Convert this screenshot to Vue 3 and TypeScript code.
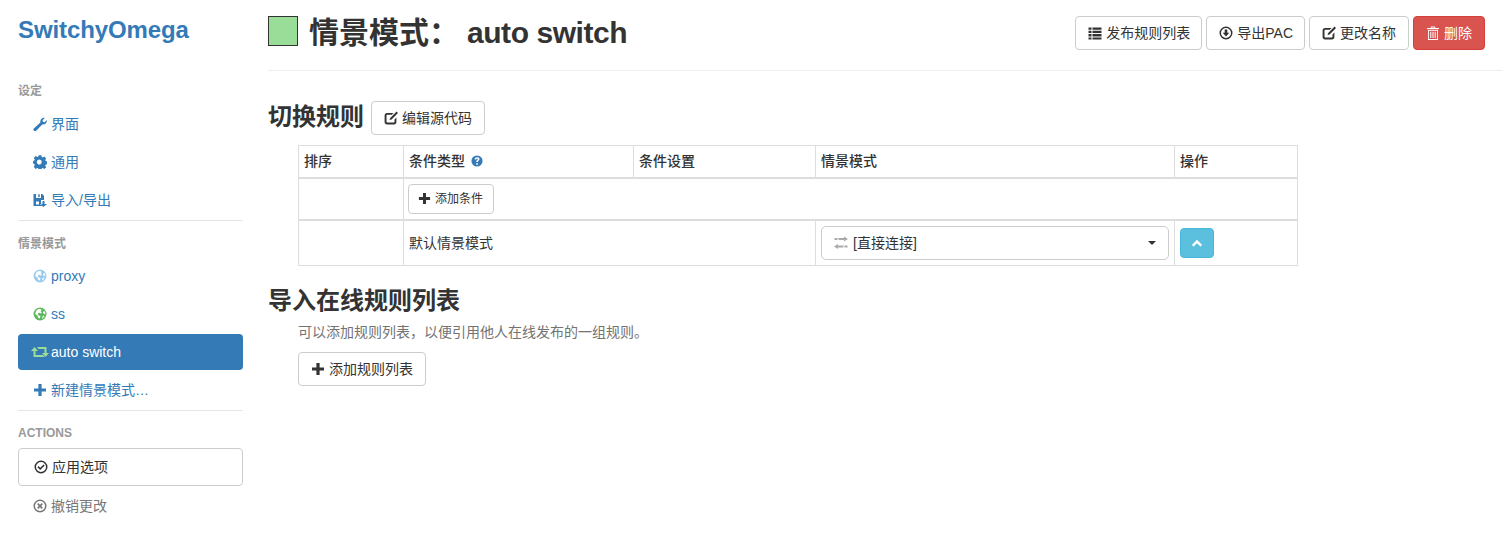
<script setup lang="ts">
// glyphicon-like icons, drawn on a 14x14 box
const icons: Record<string, string> = {
  wrench: 'M.8 11.6 7.4 5.4C6.9 3 8.8.4 11.8.9L9.6 3.2l.4 1.7 1.7.4 2.1-2.2c.5 3-2 5-4.5 4.4L2.9 13.9c-.5.5-1.1.5-1.6 0l-.5-.5c-.5-.5-.5-1.3 0-1.8Z',
  cog: 'M5.7.3h2.6l.4 1.8 1.1.5 1.6-1 1.8 1.8-1 1.6.5 1.1 1.8.4v2.6l-1.8.4-.5 1.1 1 1.6-1.8 1.8-1.6-1-1.1.5-.4 1.8H5.7l-.4-1.8-1.1-.5-1.6 1L.8 11.7l1-1.6-.5-1.1L.1 8.6V6l1.2-.4.5-1.1-1-1.6L2.6 1.1l1.6 1 1.1-.5ZM7 4.7a2.5 2.5 0 1 0 0 4.8 2.5 2.5 0 0 0 0-4.8Z',
  save: 'M.5 1H3v4h5V1h1.2L11 2.8V7H8v3.5h.5V13H.5V1ZM5.2 1.200h1.500V4H5.200V1.200ZM3 8.500v3h3v-3H3ZM9.500 8h2v3H14l-3.500 3L7 11h2.500V8Z',
  globe: 'M7 .5a6.500 6.500 0 1 0 0 13 6.500 6.500 0 0 0 0-13ZM4 3c1-.8 2-1.200 3-1.200L8.600 3 7.500 4.400 8.800 5l-.7 1.400L6 5.800 4.600 7 5.600 8.600 7.500 9 6.800 11.600 5.400 11 4.600 8.800 2.400 7.200C2.400 5.500 3 4 4 3Zm6.400 1.400 1.400-.2c.5 1 .6 2 .4 3l-1.400-.4-.9-1.200.5-1.200Zm-.2 4.200 1.300.5c-.5 1.200-1.400 2.100-2.500 2.600L9.400 10l.8-1.400Z',
  retweet: 'M3.500 2 7 6H4.500v4H12l1.500 2H2.500V6H0L3.500 2ZM6 2h9.500v6H18l-3.500 4L11 8h2.500V4H7.500L6 2Z',
  plus: 'M5.400 1h3.200v4.400H13v3.200H8.600V13H5.400V8.600H1V5.400h4.400V1Z',
  okCircle: 'M7 .5a6.500 6.500 0 1 1 0 13 6.500 6.500 0 0 1 0-13Zm0 1.500a5 5 0 1 0 0 10 5 5 0 0 0 0-10ZM9.600 4.400l1.100 1.100-4.500 4.500-2.800-2.800 1.100-1.100 1.700 1.700 3.400-3.400Z',
  xCircle: 'M7 .5a6.500 6.500 0 1 1 0 13 6.500 6.500 0 0 1 0-13Zm0 1.500a5 5 0 1 0 0 10 5 5 0 0 0 0-10ZM5.300 4.100 7 5.800l1.700-1.700 1.200 1.200L8.200 7l1.700 1.700-1.200 1.200L7 8.200 5.300 9.900 4.100 8.700 5.800 7 4.100 5.300l1.200-1.200Z',
  list: 'M.5 1.500h3v2.300h-3V1.500Zm4 0h9v2.300h-9V1.500ZM.5 4.800h3v2.300h-3V4.800Zm4 0h9v2.300h-9V4.800ZM.5 8.100h3v2.300h-3V8.100Zm4 0h9v2.300h-9V8.100ZM.5 11.400h3v2.100h-3v-2.100Zm4 0h9v2.100h-9v-2.100Z',
  download: 'M7 .5a6.500 6.500 0 1 1 0 13 6.500 6.500 0 0 1 0-13Zm0 1.500a5 5 0 1 0 0 10 5 5 0 0 0 0-10ZM5.700 3.400h2.600v3.300h2L7 10.400 3.700 6.700h2V3.400Z',
  edit: 'M3 2h6.500L7.800 3.800H3.200c-.4 0-.7.3-.7.7v6.200c0 .4.3.7.7.7h6.600c.4 0 .7-.3.7-.7V8.500l1.900-1.900V11c0 1.400-1 2.400-2.400 2.400H3c-1.400 0-2.400-1-2.400-2.400V4.400C.6 3 1.600 2 3 2Zm9.600-1.400 1.400 1.400-6.400 6.400-2.100.7.7-2.100 6.400-6.400Z',
  trash: 'M5 .5h4l.5 1.500H13v1H1V2h3.500L5 .5Zm.6.9-.2.6h3.200l-.2-.6H5.600ZM2 3.800h10V14H2V3.800Zm.9.9V13.100h8.200V4.700H2.900ZM4.300 5.800h1v6.200h-1V5.800Zm2.200 0h1v6.200h-1V5.800Zm2.200 0h1v6.200h-1V5.800Z',
  help: 'M7 .5a6.500 6.500 0 1 1 0 13 6.500 6.500 0 0 1 0-13ZM6 9.700v1.800h2V9.700H6Zm1-7C5.400 2.700 4.300 3.600 4.200 5.200h1.900c0-.6.4-1 .9-1s.9.3.9.8c0 .9-1.900 1.200-1.900 3.100h1.900c0-1.200 2-1.500 2-3.300 0-1.400-1.200-2.100-2.900-2.100Z',
  transfer: 'M10 .5l4 2.500-4 2.500V4H4.500V2H10V.5ZM.5 2h3v2h-3V2ZM4 8v1.500h5.500v2H4V13L0 10.500 4 8Zm6.500 1.500h3v2h-3v-2Z',
  chevron: 'M7 3.200l6 6-2 2-4-4-4 4-2-2 6-6Z',
}

const settings = [
  { label: '界面', icon: 'wrench' },
  { label: '通用', icon: 'cog' },
  { label: '导入/导出', icon: 'save' },
]
const profiles = [
  { label: 'proxy', icon: 'globe', tint: '#99ccee' },
  { label: 'ss', icon: 'globe', tint: '#5cb85c' },
]
const headerButtons = [
  { label: '发布规则列表', icon: 'list' },
  { label: '导出PAC', icon: 'download' },
  { label: '更改名称', icon: 'edit' },
]
</script>

<template>
  <div class="page">
    <aside class="sidebar">
      <h1 class="logo">SwitchyOmega</h1>
      <div class="nav-header nav-header--first">设定</div>
      <a v-for="item in settings" :key="item.label" class="nav-item">
        <svg class="ic" viewBox="0 0 14 14"><path :d="icons[item.icon]" /></svg>
        <span>{{ item.label }}</span>
      </a>
      <div class="divider"></div>
      <div class="nav-header">情景模式</div>
      <a v-for="item in profiles" :key="item.label" class="nav-item">
        <svg class="ic" viewBox="0 0 14 14" :style="{ color: item.tint }"><path :d="icons[item.icon]" /></svg>
        <span>{{ item.label }}</span>
      </a>
      <a class="nav-item nav-item--active">
        <svg class="ic ic--retweet" viewBox="0 0 18 14"><path :d="icons.retweet" /></svg>
        <span>auto switch</span>
      </a>
      <a class="nav-item">
        <svg class="ic" viewBox="0 0 14 14"><path :d="icons.plus" /></svg>
        <span>新建情景模式…</span>
      </a>
      <div class="divider"></div>
      <div class="nav-header nav-header--actions">ACTIONS</div>
      <button class="btn btn--apply">
        <svg class="ic" viewBox="0 0 14 14"><path :d="icons.okCircle" /></svg>
        <span>应用选项</span>
      </button>
      <a class="nav-item nav-item--muted">
        <svg class="ic" viewBox="0 0 14 14"><path :d="icons.xCircle" /></svg>
        <span>撤销更改</span>
      </a>
    </aside>

    <main class="content">
      <header class="page-header">
        <div class="swatch"></div>
        <h2 class="page-title"><span class="page-title__cn">情景模式：</span><span class="page-title__name">auto switch</span></h2>
        <div class="page-actions">
          <button v-for="b in headerButtons" :key="b.label" class="btn">
            <svg class="ic" viewBox="0 0 14 14"><path :d="icons[b.icon]" /></svg>
            <span>{{ b.label }}</span>
          </button>
          <button class="btn btn--danger">
            <svg class="ic" viewBox="0 0 14 14"><path :d="icons.trash" /></svg>
            <span>删除</span>
          </button>
        </div>
      </header>

      <section class="rules">
        <div class="section-title">
          <h3>切换规则</h3>
          <button class="btn">
            <svg class="ic" viewBox="0 0 14 14"><path :d="icons.edit" /></svg>
            <span>编辑源代码</span>
          </button>
        </div>
        <table class="rule-table">
          <colgroup>
            <col style="width: 105px" />
            <col style="width: 230px" />
            <col style="width: 182px" />
            <col style="width: 359px" />
            <col style="width: 123px" />
          </colgroup>
          <thead>
            <tr>
              <th>排序</th>
              <th>
                条件类型
                <svg class="ic ic--help" viewBox="0 0 14 14"><path :d="icons.help" /></svg>
              </th>
              <th>条件设置</th>
              <th>情景模式</th>
              <th>操作</th>
            </tr>
          </thead>
          <tbody>
            <tr class="row-add">
              <td></td>
              <td colspan="4">
                <button class="btn btn--xs">
                  <svg class="ic" viewBox="0 0 14 14"><path :d="icons.plus" /></svg>
                  <span>添加条件</span>
                </button>
              </td>
            </tr>
            <tr class="row-default">
              <td></td>
              <td colspan="2">默认情景模式</td>
              <td>
                <div class="select">
                  <svg class="ic ic--transfer" viewBox="0 0 14 14"><path :d="icons.transfer" /></svg>
                  <span>[直接连接]</span>
                  <i class="caret"></i>
                </div>
              </td>
              <td>
                <button class="btn btn--info">
                  <svg class="ic ic--chevron" viewBox="0 0 14 14"><path :d="icons.chevron" /></svg>
                </button>
              </td>
            </tr>
          </tbody>
        </table>
      </section>

      <section class="online">
        <h3>导入在线规则列表</h3>
        <p class="help-text">可以添加规则列表，以便引用他人在线发布的一组规则。</p>
        <button class="btn">
          <svg class="ic" viewBox="0 0 14 14"><path :d="icons.plus" /></svg>
          <span>添加规则列表</span>
        </button>
      </section>
    </main>
  </div>
</template>

<style>
body {
  margin: 0;
  background: #fff;
}
</style>

<style scoped>
.page {
  display: flex;
  height: 534px;
  overflow: hidden;
  font-family: "Liberation Sans", "Noto Sans CJK SC", sans-serif;
  font-size: 14px;
  line-height: 20px;
  color: #333;
}
.sidebar {
  flex: none;
  width: 225px;
  margin-left: 18px;
}
.logo {
  margin: 16px 0 0;
  font-size: 24px;
  line-height: 28px;
  font-weight: 700;
  letter-spacing: -0.1px;
  color: #337ab7;
}
.nav-header {
  font-size: 12px;
  line-height: 17px;
  font-weight: 700;
  color: #999;
  padding-top: 15px;
  margin-bottom: 5px;
}
.nav-header--first {
  padding-top: 39px;
  margin-bottom: 6px;
}
.nav-header--actions {
  padding-top: 14px;
  margin-bottom: 6px;
}
.nav-item {
  display: flex;
  align-items: center;
  height: 36px;
  margin-bottom: 2px;
  padding-left: 15px;
  border-radius: 4px;
  color: #337ab7;
}
.nav-item--active {
  background: #337ab7;
  color: #fff;
}
.nav-item--muted {
  color: #777;
  margin-top: 2px;
}
.ic {
  flex: none;
  width: 14px;
  height: 14px;
  margin-right: 4px;
  fill: currentColor;
  fill-rule: evenodd;
}
.ic--retweet {
  width: 18px;
  margin-left: -2px;
  margin-right: 2px;
  color: #99dd99;
}
.ic--help {
  width: 12px;
  height: 12px;
  margin: 0 0 0 2px;
  color: #337ab7;
  vertical-align: -1px;
}
.ic--transfer {
  margin-right: 5px;
  color: #aaa;
}
.ic--chevron {
  width: 12px;
  height: 12px;
  margin: 0;
}
.divider {
  height: 1px;
  background: #e5e5e5;
  margin-top: 1px;
}
.btn {
  display: inline-flex;
  align-items: center;
  justify-content: center;
  box-sizing: border-box;
  height: 34px;
  padding: 0 12px;
  border: 1px solid #ccc;
  border-radius: 4px;
  background: #fff;
  color: #333;
  font: inherit;
}
.btn--apply {
  width: 100%;
  height: 38px;
  justify-content: flex-start;
  padding-left: 15px;
}
.btn--danger {
  background: #d9534f;
  border-color: #d43f3a;
  color: #fff;
}
.btn--info {
  width: 34px;
  height: 30px;
  padding: 0;
  background: #5bc0de;
  border-color: #46b8da;
  color: #fff;
}
.btn--xs {
  height: 30px;
  margin-left: -1px;
  padding: 0 10px 0 9px;
  font-size: 12px;
}
.btn--xs .ic {
  width: 13px;
  height: 13px;
}
.content {
  flex: 1;
  min-width: 0;
  margin-left: 25px;
}
.page-header {
  display: flex;
  align-items: center;
  box-sizing: border-box;
  height: 71px;
  padding-right: 17px;
  padding-bottom: 5px;
  border-bottom: 1px solid #eee;
}
.swatch {
  flex: none;
  box-sizing: border-box;
  width: 30px;
  height: 30px;
  background: #99dd99;
  border: 1px solid #333;
  margin: 0 11px 4px 0;
}
.page-title {
  margin: 0;
  font-size: 30px;
  line-height: 33px;
  font-weight: 700;
  color: #333;
}
.page-title__cn {
  margin-right: 8px;
}
.page-title__name {
  letter-spacing: -0.45px;
}
.page-actions {
  display: flex;
  gap: 4px;
  margin-left: auto;
}
.page-actions .btn:nth-child(-n + 2) {
  padding-right: 11px;
}
.rules {
  margin-top: 30px;
}
.section-title {
  display: flex;
  align-items: center;
  gap: 7px;
}
.section-title h3 {
  margin-bottom: 2px;
}
h3 {
  margin: 0;
  font-size: 24px;
  line-height: 30px;
  font-weight: 700;
  color: #333;
}
.rule-table {
  width: 999px;
  margin: 10px 0 0 30px;
  table-layout: fixed;
  border-collapse: collapse;
}
.rule-table th,
.rule-table td {
  border: 1px solid #ddd;
  padding: 5px;
  text-align: left;
  font-size: 14px;
  line-height: 20px;
}
.rule-table th {
  height: 32px;
  box-sizing: border-box;
  font-weight: 500;
  border-bottom-width: 2px;
}
.row-add td {
  border-bottom-width: 2px;
}
.row-default td {
  height: 34px;
}
.select {
  display: flex;
  align-items: center;
  box-sizing: border-box;
  height: 34px;
  padding: 0 12px;
  border: 1px solid #ccc;
  border-radius: 5px;
}
.caret {
  margin-left: auto;
  width: 0;
  height: 0;
  border-top: 4px solid #333;
  border-left: 4px solid transparent;
  border-right: 4px solid transparent;
}
.online {
  margin-top: 20px;
}
.help-text {
  margin: 6px 0 10px 30px;
  color: #737373;
}
.online .btn {
  margin-left: 30px;
}
</style>
